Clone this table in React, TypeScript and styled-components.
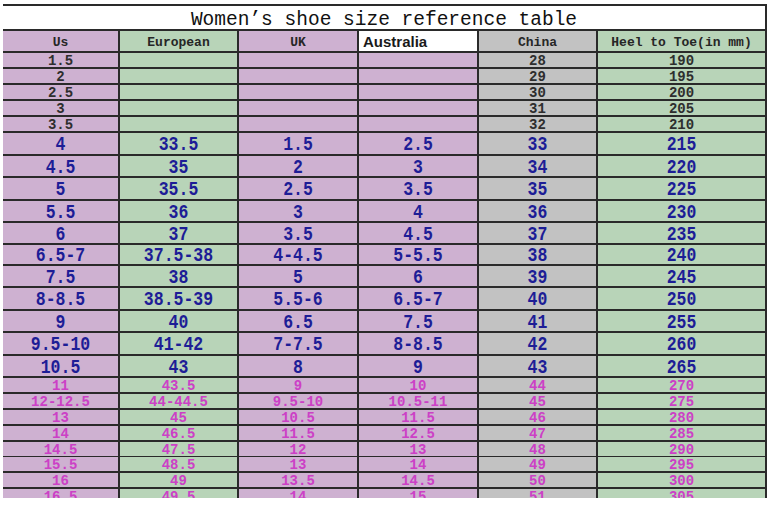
import React from "react";
import styled, { createGlobalStyle, css } from "styled-components";

const GlobalStyle = createGlobalStyle`
  html, body { margin: 0; padding: 0; background: #ffffff; }
  body { font-family: "Liberation Mono", monospace; }
`;

const PINK = "#ceb1d1";
const GREEN = "#b8d4b8";
const GREY = "#c2c2c2";
const LINE = "#2a2a2a";

type Kind = "small" | "mid" | "pink";

const colBg = [PINK, GREEN, PINK, PINK, GREY, GREEN];

const Sheet = styled.div`
  margin: 4px 0 0 3px;
  width: 764px;
  height: 494px;
  overflow: hidden;
  display: flex;
  flex-direction: column;
`;

const Title = styled.div`
  box-sizing: border-box;
  height: 27px;
  flex: none;
  background: #ffffff;
  border-top: 2px solid ${LINE};
  border-bottom: 2px solid ${LINE};
  border-right: 2px solid ${LINE};
  margin-left: -3px;
  padding: 5px 0 0 3px;
  display: flex;
  align-items: center;
  justify-content: center;
  font-family: "Liberation Mono", monospace;
  font-size: 19.5px;
  line-height: 18px;
  color: #111;
`;

const Row = styled.div<{ $h: number }>`
  display: grid;
  grid-template-columns: 117px 119px 120px 120px 119px 169px;
  height: ${(p) => p.$h}px;
  flex: none;
`;

const kindStyles = {
  small: css`
    font-size: 14px;
    color: #2e2e2e;
    transform: translateY(1px);
  `,
  mid: css`
    font-size: 16.5px;
    color: #1d1d96;
    transform: translateY(2px) scaleY(1.2);
  `,
  pink: css`
    font-size: 14px;
    color: #cc40c6;
    transform: translateY(1px);
  `,
};

const Cell = styled.div<{ $bg: string }>`
  box-sizing: border-box;
  background: ${(p) => p.$bg};
  border-right: 2px solid ${LINE};
  border-bottom: 2px solid ${LINE};
  display: flex;
  align-items: center;
  justify-content: center;
  white-space: nowrap;
`;

const CellText = styled.span<{ $kind: Kind }>`
  display: inline-block;
  line-height: 1;
  font-family: "Liberation Mono", monospace;
  font-weight: 700;
  ${(p) => kindStyles[p.$kind]}
`;

const HeadCell = styled(Cell)<{ $sans?: boolean }>`
  font-family: "Liberation Mono", monospace;
  font-weight: 700;
  font-size: 13px;
  color: #262626;
  padding-top: 2px;
  ${(p) =>
    p.$sans &&
    css`
      justify-content: flex-start;
      align-items: flex-start;
      padding: 2px 0 0 4px;
      font-family: "Liberation Sans", Arial, sans-serif;
      font-size: 15px;
      color: #1a1a1a;
    `}
`;

const headers = ["Us", "European", "UK", "Australia", "China", "Heel to Toe(in mm)"];

type RowData = { kind: Kind; h: number; cells: string[] };

const small: string[][] = [
  ["1.5", "", "", "", "28", "190"],
  ["2", "", "", "", "29", "195"],
  ["2.5", "", "", "", "30", "200"],
  ["3", "", "", "", "31", "205"],
  ["3.5", "", "", "", "32", "210"],
];

const mid: string[][] = [
  ["4", "33.5", "1.5", "2.5", "33", "215"],
  ["4.5", "35", "2", "3", "34", "220"],
  ["5", "35.5", "2.5", "3.5", "35", "225"],
  ["5.5", "36", "3", "4", "36", "230"],
  ["6", "37", "3.5", "4.5", "37", "235"],
  ["6.5-7", "37.5-38", "4-4.5", "5-5.5", "38", "240"],
  ["7.5", "38", "5", "6", "39", "245"],
  ["8-8.5", "38.5-39", "5.5-6", "6.5-7", "40", "250"],
  ["9", "40", "6.5", "7.5", "41", "255"],
  ["9.5-10", "41-42", "7-7.5", "8-8.5", "42", "260"],
  ["10.5", "43", "8", "9", "43", "265"],
];
const midH = [23, 22, 23, 22, 22, 21, 22, 23, 22, 23, 22];

const pink: string[][] = [
  ["11", "43.5", "9", "10", "44", "270"],
  ["12-12.5", "44-44.5", "9.5-10", "10.5-11", "45", "275"],
  ["13", "45", "10.5", "11.5", "46", "280"],
  ["14", "46.5", "11.5", "12.5", "47", "285"],
  ["14.5", "47.5", "12", "13", "48", "290"],
  ["15.5", "48.5", "13", "14", "49", "295"],
  ["16", "49", "13.5", "14.5", "50", "300"],
  ["16.5", "49.5", "14", "15", "51", "305"],
];
const pinkH = [16, 16, 16, 16, 15, 16, 16, 16];

const rows: RowData[] = [
  ...small.map((cells) => ({ kind: "small" as Kind, h: 16, cells })),
  ...mid.map((cells, i) => ({ kind: "mid" as Kind, h: midH[i], cells })),
  ...pink.map((cells, i) => ({ kind: "pink" as Kind, h: pinkH[i], cells })),
];

export default function App() {
  return (
    <>
      <GlobalStyle />
      <Sheet>
        <Title>Women’s shoe size reference table</Title>
        <Row $h={22}>
          {headers.map((h, i) => (
            <HeadCell key={h} $bg={i === 3 ? "#ffffff" : colBg[i]} $sans={i === 3}>
              {h}
            </HeadCell>
          ))}
        </Row>
        {rows.map((r, ri) => (
          <Row key={ri} $h={r.h}>
            {r.cells.map((c, ci) => (
              <Cell key={ci} $bg={colBg[ci]}>
                {c && <CellText $kind={r.kind}>{c}</CellText>}
              </Cell>
            ))}
          </Row>
        ))}
      </Sheet>
    </>
  );
}
